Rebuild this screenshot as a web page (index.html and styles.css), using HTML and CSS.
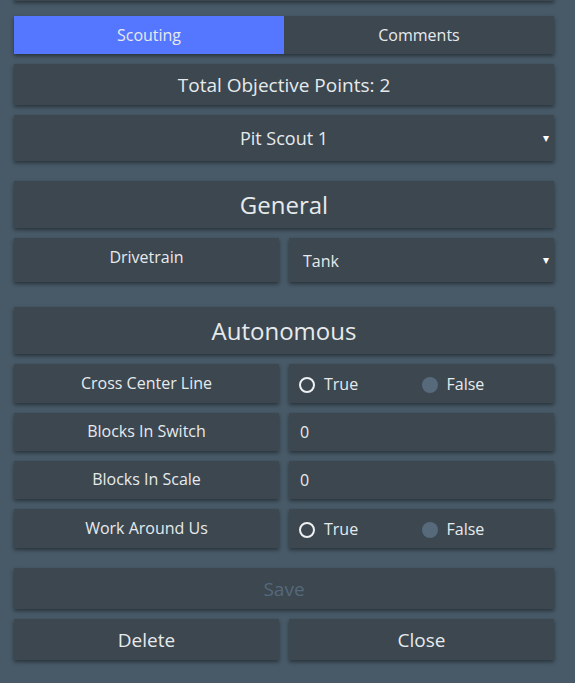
FILE: index.html
```html
<!DOCTYPE html>
<html>
<head>
<meta charset="utf-8">
<link rel="stylesheet" href="styles.css">
</head>
<body>
<div class="page">
  <div class="card topbar"></div>

  <div class="tabs card">
    <div class="tab active">Scouting</div>
    <div class="tab">Comments</div>
  </div>

  <div class="card total">Total Objective Points: 2</div>

  <div class="card select pit">
    <span class="sel-text center">Pit Scout 1</span>
    <span class="arrow">▾</span>
  </div>

  <div class="card heading general">General</div>

  <div class="row drive">
    <div class="card label lbl-drive">Drivetrain</div>
    <div class="card select field">
      <span class="sel-text">Tank</span>
      <span class="arrow">▾</span>
    </div>
  </div>

  <div class="card heading auto">Autonomous</div>

  <div class="row r39">
    <div class="card label">Cross Center Line</div>
    <div class="card radios">
      <div class="opt"><span class="radio on"></span>True</div>
      <div class="opt"><span class="radio off"></span>False</div>
    </div>
  </div>

  <div class="row r38">
    <div class="card label">Blocks In Switch</div>
    <div class="card input">0</div>
  </div>

  <div class="row r38">
    <div class="card label">Blocks In Scale</div>
    <div class="card input">0</div>
  </div>

  <div class="row r39">
    <div class="card label">Work Around Us</div>
    <div class="card radios">
      <div class="opt"><span class="radio on"></span>True</div>
      <div class="opt"><span class="radio off"></span>False</div>
    </div>
  </div>

  <div class="card btn save">Save</div>

  <div class="row r41">
    <div class="card btn">Delete</div>
    <div class="card btn">Close</div>
  </div>
</div>
</body>
</html>
```

FILE: styles.css
```css
html, body {
  margin: 0;
  padding: 0;
  background: #485a68;
  height: 100%;
  overflow: hidden;
}
body {
  font-family: "Open Sans", "Liberation Sans", sans-serif;
  color: #e7eaec;
}
.page {
  width: 540px;
  margin-left: 14px;
  display: flex;
  flex-direction: column;
}
.card {
  background: #3c4750;
  box-shadow: 0 2px 4px rgba(0, 0, 0, 0.45);
  box-sizing: border-box;
}
.topbar {
  height: 40px;
  margin-top: -39px;
}
.tabs {
  margin-top: 15px;
  height: 38px;
  display: grid;
  grid-template-columns: 1fr 1fr;
}
.tab {
  display: flex;
  align-items: center;
  justify-content: center;
  font-size: 16px;
}
.tab.active {
  background: #5577ff;
}
.total {
  margin-top: 10px;
  height: 41px;
  display: flex;
  align-items: center;
  justify-content: center;
  font-size: 19px;
}
.select {
  position: relative;
  display: flex;
  align-items: center;
}
.pit {
  margin-top: 10px;
  height: 46px;
  justify-content: center;
  font-size: 18px;
}
.arrow {
  position: absolute;
  right: 5px;
  top: 50%;
  transform: translateY(-52%);
  font-size: 12px;
  line-height: 1;
  color: #ffffff;
}
.heading {
  height: 47px;
  display: flex;
  align-items: center;
  justify-content: center;
  font-size: 24px;
}
.general { margin-top: 20px; }
.auto { margin-top: 25px; }
.row {
  display: grid;
  grid-template-columns: 1fr 1fr;
  gap: 10px;
  margin-top: 10px;
}
.row > .card { min-width: 0; }
.drive { height: 44px; }
.r39 { height: 39px; }
.r38 { height: 38px; }
.r41 { height: 41px; }
.label {
  display: flex;
  align-items: center;
  justify-content: center;
  font-size: 16px;
  padding-bottom: 2px;
}
.lbl-drive { padding-bottom: 6px; }
.field {
  padding-left: 14px;
  font-size: 16px;
  padding-top: 1px;
}
.radios {
  display: grid;
  grid-template-columns: 1fr 1fr;
  padding: 0 10px;
  font-size: 16px;
}
.opt {
  display: flex;
  align-items: center;
}
.radio {
  width: 16px;
  height: 16px;
  border-radius: 50%;
  box-sizing: border-box;
  margin-right: 9px;
  margin-top: 3px;
  flex: none;
}
.radio.on { border: 2px solid #eef0f2; }
.radio.off { background: #566a7c; }
.input {
  display: flex;
  align-items: center;
  padding-left: 11px;
  font-size: 16px;
}
.btn {
  display: flex;
  align-items: center;
  justify-content: center;
  font-size: 19px;
}
.save {
  margin-top: 20px;
  height: 41px;
  color: #55697b;
}
```
